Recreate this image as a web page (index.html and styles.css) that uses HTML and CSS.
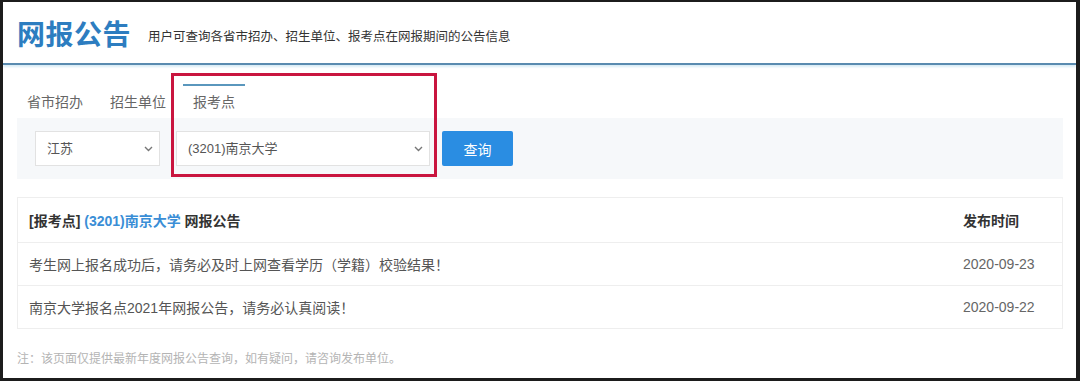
FILE: index.html
```html
<!DOCTYPE html>
<html lang="zh-CN">

<head>
    <meta charset="UTF-8">
    <meta name="viewport" content="width=device-width, initial-scale=1.0">
    <title>网报公告</title>
    <link rel="stylesheet" href="styles.css">
</head>

<body>
    <div class="frame">
        <header class="page-head">
            <h1>网报公告</h1>
            <p>用户可查询各省市招办、招生单位、报考点在网报期间的公告信息</p>
        </header>

        <main class="content">
            <nav class="tabs">
                <a href="#">省市招办</a>
                <a href="#">招生单位</a>
                <a href="#" class="active">报考点</a>
            </nav>

            <div class="filter">
                <div class="select province">
                    <select>
                        <option>江苏</option>
                    </select>
                    <svg class="chevron" width="9" height="6" viewBox="0 0 9 6"><path d="M1 1l3.5 3.5L8 1" fill="none" stroke="#777" stroke-width="1.4"/></svg>
                </div>
                <div class="select site">
                    <select>
                        <option>(3201)南京大学</option>
                    </select>
                    <svg class="chevron" width="9" height="6" viewBox="0 0 9 6"><path d="M1 1l3.5 3.5L8 1" fill="none" stroke="#777" stroke-width="1.4"/></svg>
                </div>
                <button>查询</button>
            </div>

            <table class="notice">
                <thead>
                    <tr>
                        <th>[报考点] <span class="unit">(3201)南京大学</span> 网报公告</th>
                        <th class="date">发布时间</th>
                    </tr>
                </thead>
                <tbody>
                    <tr>
                        <td>考生网上报名成功后，请务必及时上网查看学历（学籍）校验结果！</td>
                        <td class="date">2020-09-23</td>
                    </tr>
                    <tr>
                        <td>南京大学报名点2021年网报公告，请务必认真阅读！</td>
                        <td class="date">2020-09-22</td>
                    </tr>
                </tbody>
            </table>

            <p class="note">注：该页面仅提供最新年度网报公告查询，如有疑问，请咨询发布单位。</p>
        </main>

        <div class="highlight"></div>
    </div>
</body>

</html>
```

FILE: styles.css
```css
body {
    margin: 0;
    padding: 0;
    font-family: "Liberation Sans", "Noto Sans CJK SC", sans-serif;
    background-color: #ffffff;
    color: #555555;
}

.frame {
    position: relative;
    width: 1080px;
    height: 381px;
    box-sizing: border-box;
    border-style: solid;
    border-color: #1c1c1c;
    border-width: 2px 4px 3px 3px;
    overflow: hidden;
}

.page-head {
    display: flex;
    align-items: center;
    height: 61px;
    padding-left: 14px;
    border-bottom: 2px solid #5a8bb0;
    box-shadow: 0 2px 2px #d9ecf6;
}

.page-head h1 {
    margin: 0;
    font-size: 28px;
    font-weight: bold;
    color: #2d7dc0;
    letter-spacing: 0.5px;
}

.page-head p {
    margin: 5px 0 0 17px;
    font-size: 12.5px;
    color: #333333;
}

.content {
    padding: 0 13px 0 14px;
}

.tabs {
    display: flex;
    margin-top: 19px;
}

.tabs a {
    display: block;
    padding: 0 10px;
    margin-right: 7px;
    border-top: 2px solid transparent;
    line-height: 32px;
    font-size: 14px;
    color: #666666;
    text-decoration: none;
}

.tabs a.active {
    border-top-color: #5a97bd;
}

.filter {
    display: flex;
    align-items: center;
    height: 61px;
    padding: 0 18px;
    background-color: #f6f8fa;
}

.select {
    position: relative;
    height: 35px;
}

.select select {
    appearance: none;
    -webkit-appearance: none;
    width: 100%;
    height: 100%;
    padding: 0 11px;
    border: 1px solid #e2e2e2;
    border-radius: 0;
    background-color: #ffffff;
    font-family: "Liberation Sans", "Noto Sans CJK SC", sans-serif;
    font-size: 13px;
    color: #555555;
}

.select .chevron {
    position: absolute;
    right: 7px;
    top: 15px;
}

.province {
    width: 125px;
}

.site {
    width: 254px;
    margin-left: 16px;
}

.filter button {
    width: 71px;
    height: 35px;
    margin-left: 12px;
    border: none;
    border-radius: 2px;
    background-color: #2a8de2;
    color: #ffffff;
    font-family: "Liberation Sans", "Noto Sans CJK SC", sans-serif;
    font-size: 14px;
    cursor: pointer;
}

.notice {
    width: 100%;
    margin-top: 18px;
    border-collapse: collapse;
    border: 1px solid #eeeeee;
    font-size: 14px;
}

.notice th,
.notice td {
    padding: 0 11px;
    text-align: left;
    border-bottom: 1px solid #eeeeee;
}

.notice th {
    height: 44px;
    font-weight: bold;
    color: #333333;
}

.notice td {
    height: 42px;
    color: #555555;
}

.notice .unit {
    color: #3a8ed6;
}

.notice .date {
    width: 88px;
    padding-left: 0;
    color: #666666;
}

.notice th.date {
    color: #333333;
}

.note {
    margin: 20px 0 0;
    line-height: 20px;
    font-size: 12px;
    color: #b4b4b4;
}

.highlight {
    position: absolute;
    left: 168px;
    top: 71px;
    width: 260px;
    height: 98px;
    border: 3px solid #c9153f;
}
```
